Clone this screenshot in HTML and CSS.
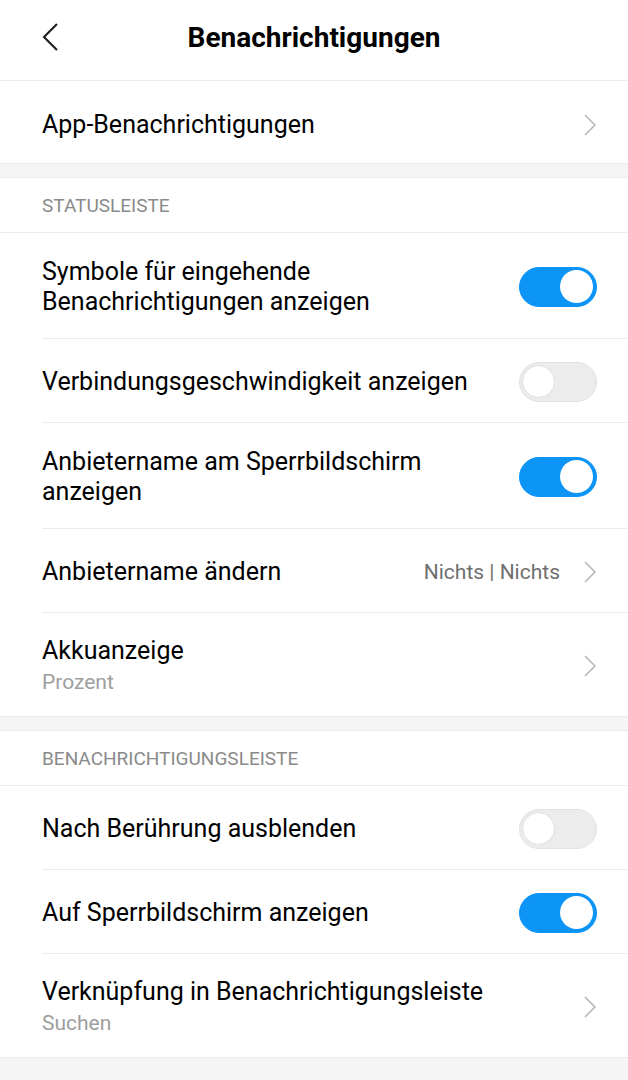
FILE: index.html
```html
<!DOCTYPE html>
<html lang="de">
  <head>
    <title>Benachrichtigungen</title>
    <meta charset="utf-8">
    <meta name="viewport" content="width=device-width, initial-scale=1">
    <link rel="stylesheet" href="styles.css">
  </head>
  <body>
    <header class="topbar">
      <span class="back">
        <svg width="18" height="28" viewBox="0 0 18 28"><path d="M15 1 L2 14 L15 27" fill="none" stroke="#222" stroke-width="2.2"/></svg>
      </span>
      <h1>Benachrichtigungen</h1>
    </header>

    <section class="group">
      <div class="row single">
        <div class="label"><div class="title">App-Benachrichtigungen</div></div>
        <svg class="chev" width="12" height="22" viewBox="0 0 12 22"><path d="M1 1 L11 11 L1 21" fill="none" stroke="#b4b4b4" stroke-width="1.5"/></svg>
      </div>
    </section>

    <section class="group">
      <div class="section-head">STATUSLEISTE</div>
      <div class="row tall">
        <div class="label"><div class="title">Symbole für eingehende<br>Benachrichtigungen anzeigen</div></div>
        <span class="switch on"></span>
      </div>
      <div class="row">
        <div class="label"><div class="title">Verbindungsgeschwindigkeit anzeigen</div></div>
        <span class="switch"></span>
      </div>
      <div class="row tall">
        <div class="label"><div class="title">Anbietername am Sperrbildschirm<br>anzeigen</div></div>
        <span class="switch on"></span>
      </div>
      <div class="row">
        <div class="label"><div class="title">Anbietername ändern</div></div>
        <span class="value">Nichts | Nichts</span>
        <svg class="chev" width="12" height="22" viewBox="0 0 12 22"><path d="M1 1 L11 11 L1 21" fill="none" stroke="#b4b4b4" stroke-width="1.5"/></svg>
      </div>
      <div class="row sub-row">
        <div class="label">
          <div class="title">Akkuanzeige</div>
          <div class="sub">Prozent</div>
        </div>
        <svg class="chev" width="12" height="22" viewBox="0 0 12 22"><path d="M1 1 L11 11 L1 21" fill="none" stroke="#b4b4b4" stroke-width="1.5"/></svg>
      </div>
    </section>

    <section class="group">
      <div class="section-head">BENACHRICHTIGUNGSLEISTE</div>
      <div class="row">
        <div class="label"><div class="title">Nach Berührung ausblenden</div></div>
        <span class="switch"></span>
      </div>
      <div class="row">
        <div class="label"><div class="title">Auf Sperrbildschirm anzeigen</div></div>
        <span class="switch on"></span>
      </div>
      <div class="row sub-row">
        <div class="label">
          <div class="title">Verknüpfung in Benachrichtigungsleiste</div>
          <div class="sub">Suchen</div>
        </div>
        <svg class="chev" width="12" height="22" viewBox="0 0 12 22"><path d="M1 1 L11 11 L1 21" fill="none" stroke="#b4b4b4" stroke-width="1.5"/></svg>
      </div>
    </section>
  </body>
</html>
```

FILE: styles.css
```css
html, body {
  margin: 0;
  padding: 0;
}

body {
  background: #f5f5f5;
  font-family: Roboto, "Noto Sans", sans-serif;
  color: #000;
  min-height: 1080px;
}

.topbar {
  height: 80px;
  background: #fff;
  display: flex;
  align-items: center;
  justify-content: center;
  position: relative;
  border-bottom: 1px solid #ebebeb;
}

.topbar h1 {
  margin: 0;
  font-size: 28px;
  font-weight: 700;
  margin-top: -5px;
}

.back {
  position: absolute;
  left: 42px;
  top: 23px;
  display: flex;
}

.group {
  background: #fff;
  border-bottom: 1px solid #ebebeb;
  margin-bottom: 13px;
}

.group + .group {
  border-top: 1px solid #ebebeb;
}

.section-head {
  height: 54px;
  box-sizing: border-box;
  padding: 16px 0 0 42px;
  font-size: 19px;
  color: #8a8a8a;
}

.section-head + .row {
  border-top: 1px solid #ebebeb;
}

.row {
  display: flex;
  align-items: center;
  height: 84px;
  padding: 2px 31px 0 42px;
  box-sizing: border-box;
  position: relative;
}

.row.single {
  height: 82px;
  padding-top: 6px;
}

.row.tall {
  height: 106px;
}

.row.sub-row {
  height: 104px;
}

.row + .row {
  border-top: 1px solid transparent;
}

.row + .row::before {
  content: "";
  position: absolute;
  left: 42px;
  right: 0;
  top: -1px;
  border-top: 1px solid #ebebeb;
}

.label {
  flex: 1;
  min-width: 0;
}

.title {
  font-size: 25px;
  line-height: 30px;
  color: #000;
}

.sub {
  font-size: 21px;
  line-height: 26px;
  color: #9e9e9e;
  margin-top: 3px;
}

.value {
  font-size: 21px;
  color: #6f6f6f;
  margin-right: 24px;
}

.chev {
  display: block;
  margin-right: 1px;
}

.switch {
  width: 78px;
  height: 40px;
  border-radius: 20px;
  background: #ececec;
  border: 1.5px solid #e2e2e2;
  box-sizing: border-box;
  position: relative;
}

.switch::after {
  content: "";
  position: absolute;
  left: 2px;
  top: 2px;
  width: 33px;
  height: 33px;
  border-radius: 50%;
  background: #fff;
  border: 1.5px solid #dedede;
  box-sizing: border-box;
}

.switch.on {
  background: #0d94f7;
  border-color: #0d94f7;
}

.switch.on::after {
  left: auto;
  right: 3px;
  border: none;
}
```
